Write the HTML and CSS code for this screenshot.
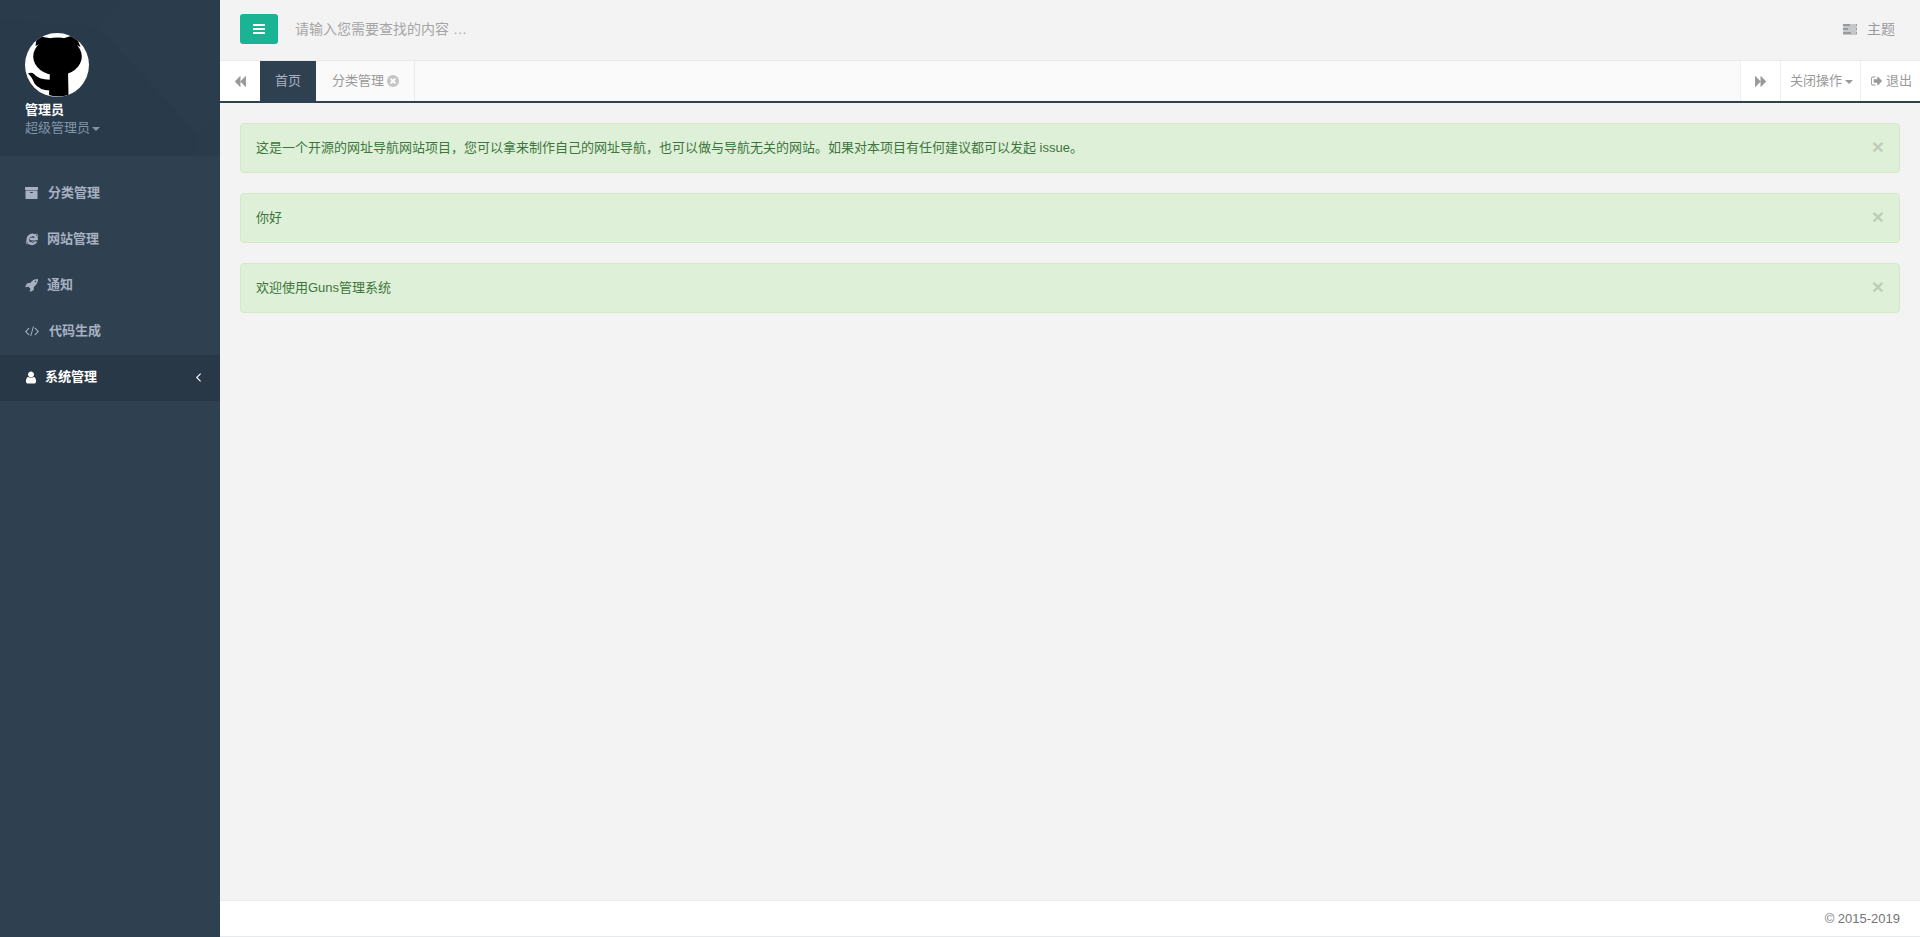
FILE: index.html
```html
<!DOCTYPE html>
<html lang="zh-CN">
<head>
<meta charset="utf-8">
<title>Guns</title>
<link rel="stylesheet" href="styles.css">
</head>
<body>
<div class="app">
  <aside class="sidebar">
    <div class="profile">
      <svg class="profile-bg" viewBox="0 0 220 156" preserveAspectRatio="none" aria-hidden="true">
        <polygon points="0,0 120,0 98,28 0,20" fill="#2a3b4b"/>
        <polygon points="120,0 220,0 220,117 197,133 98,28" fill="#2b3d4d"/>
        <polygon points="0,20 98,28 197,133 197,156 0,156" fill="#293a4a"/>
        <polygon points="197,133 220,117 220,156 197,156" fill="#2a3c4c"/>
      </svg>
      <div class="avatar">
        <svg viewBox="0 0 64 64" aria-hidden="true">
          <ellipse cx="32.500" cy="23.500" rx="24.300" ry="19"/>
          <polygon points="10.500,13 12,3 27,5.500"/>
          <polygon points="38,5.500 50.500,1.500 55.500,14"/>
          <path d="M25 38 H43 L43.500 62 Q33 65 24 62 Z"/>
          <path d="M3 40.500 Q6.500 39 9 41 Q13 46.500 25 46.800 V57.500 Q14 57 9.500 50.500 Q7 44 3 40.500 Z"/>
        </svg>
      </div>
      <div class="profile-name">管理员</div>
      <div class="profile-role">超级管理员<span class="caret caret-role"></span></div>
    </div>
    <nav class="nav">
      <a class="nav-item">
        <svg class="ico i-archive" viewBox="64 128 1664 1536"><path d="M1088 832q0-26-19-45t-45-19h-256q-26 0-45 19t-19 45 19 45 45 19h256q26 0 45-19t19-45zm576-192v960q0 26-19 45t-45 19h-1408q-26 0-45-19t-19-45v-960q0-26 19-45t45-19h1408q26 0 45 19t19 45zm64-448v256q0 26-19 45t-45 19h-1536q-26 0-45-19t-19-45v-256q0-26 19-45t45-19h1536q26 0 45 19t19 45z"/></svg>
        <span>分类管理</span>
      </a>
      <a class="nav-item">
        <svg class="ico i-ie" viewBox="0 0 16 16"><ellipse cx="8" cy="8" rx="8" ry="2.800" transform="rotate(-38 8 8)" fill="none" stroke="currentColor" stroke-width="1"/><path d="M12.800 10.900 A5.200 5.200 0 1 1 13.400 8 H5.400" fill="none" stroke="currentColor" stroke-width="2.700"/></svg>
        <span>网站管理</span>
      </a>
      <a class="nav-item">
        <svg class="ico i-rocket" viewBox="64 128 1664 1664"><path d="M1504 448q0-40-28-68t-68-28-68 28-28 68 28 68 68 28 68-28 28-68zm224-288q0 249-75.500 430.500t-253.500 360.500q-81 80-195 176l-20 379q-2 16-16 26l-384 224q-7 4-16 4-12 0-23-9l-64-64q-13-14-8-32l85-276-281-281-276 85q-3 1-9 1-14 0-23-9l-64-64q-17-19-5-39l224-384q10-14 26-16l379-20q96-114 176-195 188-187 358-258t431-71q14 0 24 9.500t10 22.500z"/></svg>
        <span>通知</span>
      </a>
      <a class="nav-item">
        <svg class="ico i-code" viewBox="45 230 1830 1330"><path d="M617 1399l-50 50q-10 10-23 10t-23-10l-466-466q-10-10-10-23t10-23l466-466q10-10 23-10t23 10l50 50q10 10 10 23t-10 23l-393 393 393 393q10 10 10 23t-10 23zm591-1067l-373 1291q-4 13-15.500 19.500t-23.500 2.500l-62-17q-13-4-19.500-15.500t-2.500-24.500l373-1291q4-13 15.500-19.500t23.500-2.500l62 17q13 4 19.500 15.500t2.500 24.500zm657 651l-466 466q-10 10-23 10t-23-10l-50-50q-10-10-10-23t10-23l393-393-393-393q-10-10-10-23t10-23l50-50q10-10 23-10t23 10l466 466q10 10 10 23t-10 23z"/></svg>
        <span>代码生成</span>
      </a>
      <a class="nav-item is-active">
        <svg class="ico i-user" viewBox="128 128 1408 1536"><path d="M1536 1399q0 109-62.500 187t-150.500 78h-854q-88 0-150.500-78t-62.500-187q0-85 8.500-160.500t31.500-152 58.500-131 94-89 134.500-34.500q131 128 313 128t313-128q76 0 134.500 34.500t94 89 58.500 131 31.500 152 8.500 160.500zm-256-887q0 159-112.500 271.500t-271.500 112.500-271.500-112.500-112.500-271.500 112.500-271.500 271.500-112.500 271.500 112.500 112.500 271.500z"/></svg>
        <span>系统管理</span>
        <svg class="ico i-angle" viewBox="40 450 600 1020"><path d="M627 544q0 13-10 23l-393 393 393 393q10 10 10 23t-10 23l-50 50q-10 10-23 10t-23-10l-466-466q-10-10-10-23t10-23l466-466q10-10 23-10t23 10l50 50q10 10 10 23z"/></svg>
      </a>
    </nav>
  </aside>

  <main class="main">
    <header class="topbar">
      <button class="menu-btn" type="button" aria-label="menu">
        <svg class="ico i-bars" viewBox="128 256 1536 1280"><path d="M1664 1344v128q0 26-19 45t-45 19h-1408q-26 0-45-19t-19-45v-128q0-26 19-45t45-19h1408q26 0 45 19t19 45zm0-512v128q0 26-19 45t-45 19h-1408q-26 0-45-19t-19-45v-128q0-26 19-45t45-19h1408q26 0 45 19t19 45zm0-512v128q0 26-19 45t-45 19h-1408q-26 0-45-19t-19-45v-128q0-26 19-45t45-19h1408q26 0 45 19t19 45z"/></svg>
      </button>
      <div class="search">请输入您需要查找的内容 …</div>
      <div class="theme">
        <svg class="ico i-tasks" viewBox="0 192 1792 1408"><path fill-rule="evenodd" d="M1024 1408h640v-128h-640v128zm-384-512h1024v-128h-1024v128zm256-512h768v-128h-768v128zm896 832v256q0 26-19 45t-45 19h-1664q-26 0-45-19t-19-45v-256q0-26 19-45t45-19h1664q26 0 45 19t19 45zm0-512v256q0 26-19 45t-45 19h-1664q-26 0-45-19t-19-45v-256q0-26 19-45t45-19h1664q26 0 45 19t19 45zm0-512v256q0 26-19 45t-45 19h-1664q-26 0-45-19t-19-45v-256q0-26 19-45t45-19h1664q26 0 45 19t19 45z"/></svg>
        <span>主题</span>
      </div>
    </header>

    <div class="tabs">
      <div class="tab-btn tab-prev">
        <svg class="ico i-step" viewBox="64 128 1664 1536"><path d="M1683 141q19-19 32-13t13 32v1472q0 26-13 32t-32-13l-710-710q-9-9-13-19v710q0 26-13 32t-32-13l-710-710q-19-19-19-45t19-45l710-710q19-19 32-13t13 32v710q4-10 13-19z"/></svg>
      </div>
      <div class="tab tab-home">首页</div>
      <div class="tab tab-cat">分类管理<svg class="ico i-close" viewBox="128 128 1536 1536"><path d="M1277 1122q0-26-19-45l-181-181 181-181q19-19 19-45 0-27-19-46l-90-90q-19-19-46-19-26 0-45 19l-181 181-181-181q-19-19-45-19-27 0-46 19l-90 90q-19 19-19 46 0 26 19 45l181 181-181 181q-19 19-19 45 0 27 19 46l90 90q19 19 46 19 26 0 45-19l181-181 181 181q19 19 45 19 27 0 46-19l90-90q19-19 19-46zm387-226q0 209-103 385.500t-279.500 279.500-385.500 103-385.500-103-279.500-279.500-103-385.500 103-385.500 279.500-279.500 385.500-103 385.500 103 279.500 279.500 103 385.500z"/></svg></div>
      <div class="tabs-fill"></div>
      <div class="tab-btn tab-next">
        <svg class="ico i-step" viewBox="64 128 1664 1536"><path d="M109 1651q-19 19-32 13t-13-32v-1472q0-26 13-32t32 13l710 710q9 9 13 19v-710q0-26 13-32t32 13l710 710q19 19 19 45t-19 45l-710 710q-19 19-32 13t-13-32v-710q-4 10-13 19z"/></svg>
      </div>
      <div class="tab-btn tab-close-ops">关闭操作<span class="caret"></span></div>
      <div class="tab-btn tab-logout">
        <svg class="ico i-signout" viewBox="64 256 1568 1280"><path d="M704 1440q0 4 1 20t.5 26.500-3 23.500-10 19.500-20.500 6.500h-320q-119 0-203.500-84.500t-84.500-203.500v-704q0-119 84.500-203.500t203.500-84.500h320q13 0 22.500 9.500t9.500 22.500q0 4 1 20t.5 26.500-3 23.500-10 19.500-20.500 6.500h-320q-66 0-113 47t-47 113v704q0 66 47 113t113 47h312l11.500 1 11.500 3 8 5.500 7 9 2 13.500zm928-544q0 26-19 45l-544 544q-19 19-45 19t-45-19-19-45v-288h-448q-26 0-45-19t-19-45v-384q0-26 19-45t45-19h448v-288q0-26 19-45t45-19 45 19l544 544q19 19 19 45z"/></svg>
        <span>退出</span>
      </div>
    </div>

    <section class="content">
      <div class="alert"><span>这是一个开源的网址导航网站项目，您可以拿来制作自己的网址导航，也可以做与导航无关的网站。如果对本项目有任何建议都可以发起 issue。</span><span class="alert-x">×</span></div>
      <div class="alert"><span>你好</span><span class="alert-x">×</span></div>
      <div class="alert"><span>欢迎使用Guns管理系统</span><span class="alert-x">×</span></div>
    </section>

    <footer class="footer">© 2015-2019</footer>
  </main>
</div>
</body>
</html>
```

FILE: styles.css
```css
* { box-sizing: border-box; }
html, body { margin: 0; height: 100%; }
body {
  font-family: "Liberation Sans", "Noto Sans CJK SC", Arial, sans-serif;
  font-size: 13px;
  line-height: 18px;
  color: #676a6c;
  background: #f3f3f4;
  overflow: hidden;
}
.app { display: flex; height: 937px; }
.ico { display: block; fill: currentColor; flex: none; }

/* sidebar */
.sidebar { width: 220px; flex: none; background: #2f4050; }
.profile {
  position: relative;
  height: 156px;
  padding: 33px 25px 0;
  background: #2a3b4b;
  overflow: hidden;
}
.profile-bg { position: absolute; inset: 0; width: 100%; height: 100%; display: block; }
.avatar {
  position: relative;
  width: 64px;
  height: 64px;
  border-radius: 50%;
  background: #fff;
  overflow: hidden;
}
.avatar svg { display: block; width: 64px; height: 64px; fill: #000; }
.profile-name {
  position: relative;
  margin-top: 4px;
  font-weight: 700;
  color: #fff;
}
.profile-role {
  position: relative;
  display: flex;
  align-items: center;
  color: #8095a8;
}
.caret {
  display: inline-block;
  width: 0;
  height: 0;
  margin-left: 2px;
  margin-top: 2px;
  border-top: 4px solid currentColor;
  border-left: 4px solid transparent;
  border-right: 4px solid transparent;
}
.nav { margin-top: 15px; }
.nav-item {
  display: flex;
  align-items: center;
  gap: 10px;
  height: 46px;
  padding: 0 25px 2px;
  color: #a7b1c2;
  font-weight: 700;
}
.nav-item.is-active { background: #293846; color: #fff; }
.i-archive { width: 13px; height: 12px; }
.i-ie { width: 14px; height: 14px; margin-right: -2px; }
.i-rocket { width: 13px; height: 13px; margin-right: -1px; }
.i-code { width: 14px; height: 10px; }
.i-user { width: 11px; height: 13px; margin-right: -1px; }
.i-angle { width: 5px; height: 9px; margin-left: auto; margin-right: -6px; }

/* top bar */
.main { flex: 1; min-width: 0; display: flex; flex-direction: column; }
.topbar {
  display: flex;
  align-items: flex-start;
  height: 61px;
  padding: 14px 25px 0 20px;
  border-bottom: 1px solid #e7eaec;
}
.menu-btn {
  display: flex;
  align-items: center;
  justify-content: center;
  width: 38px;
  height: 30px;
  padding: 0;
  border: 0;
  border-radius: 3px;
  background: #1ab394;
  color: #fff;
}
.i-bars { width: 12px; height: 10px; }
.search { margin-left: 17px; font-size: 14px; line-height: 30px; color: #a5a5a5; }
.theme {
  display: flex;
  align-items: center;
  gap: 10px;
  margin-left: auto;
  height: 30px;
  font-size: 14px;
  color: #999c9e;
}
.i-tasks { width: 14px; height: 11px; margin-top: 1px; }

/* tabs */
.tabs {
  display: flex;
  height: 42px;
  border-bottom: 2px solid #2f4050;
  background: #fafafa;
  color: #999;
  line-height: 40px;
}
.tab-btn {
  display: flex;
  align-items: center;
  background: #fff;
}
.tab-prev { width: 40px; justify-content: center; }
.i-step { width: 12px; height: 11px; color: #999; }
.tab { display: flex; align-items: center; }
.tab-home { width: 56px; justify-content: center; background: #2f4050; color: #a7b1c2; }
.tab-cat { width: 99px; padding-left: 16px; border-right: 1px solid #e7eaec; }
.i-close { width: 12px; height: 12px; margin-left: 3px; color: #c5c5c5; }
.tabs-fill { flex: 1; }
.tab-next { width: 40px; justify-content: center; border-left: 1px solid #eee; }
.tab-close-ops { width: 80px; padding-left: 9px; border-left: 1px solid #eee; }
.tab-close-ops .caret { margin-left: 3px; }
.tab-logout { width: 60px; padding-left: 10px; gap: 4px; border-left: 1px solid #eee; }
.i-signout { width: 11px; height: 10px; }

/* alerts */
.content { flex: 1; padding: 20px 20px 0; }
.alert {
  display: flex;
  justify-content: space-between;
  align-items: center;
  height: 50px;
  margin-bottom: 20px;
  padding: 0 15px;
  border: 1px solid #d6e9c6;
  border-radius: 4px;
  background: #dff0d8;
  color: #3c763d;
}
.alert-x {
  margin-bottom: 3px;
  font-size: 21px;
  font-weight: 700;
  line-height: 1;
  color: #000;
  opacity: .14;
}

/* footer */
.footer {
  height: 37px;
  padding: 9px 20px 0;
  border-top: 1px solid #e7eaec;
  border-bottom: 1px solid #e7eaec;
  background: #fff;
  text-align: right;
  color: #737577;
}
```
